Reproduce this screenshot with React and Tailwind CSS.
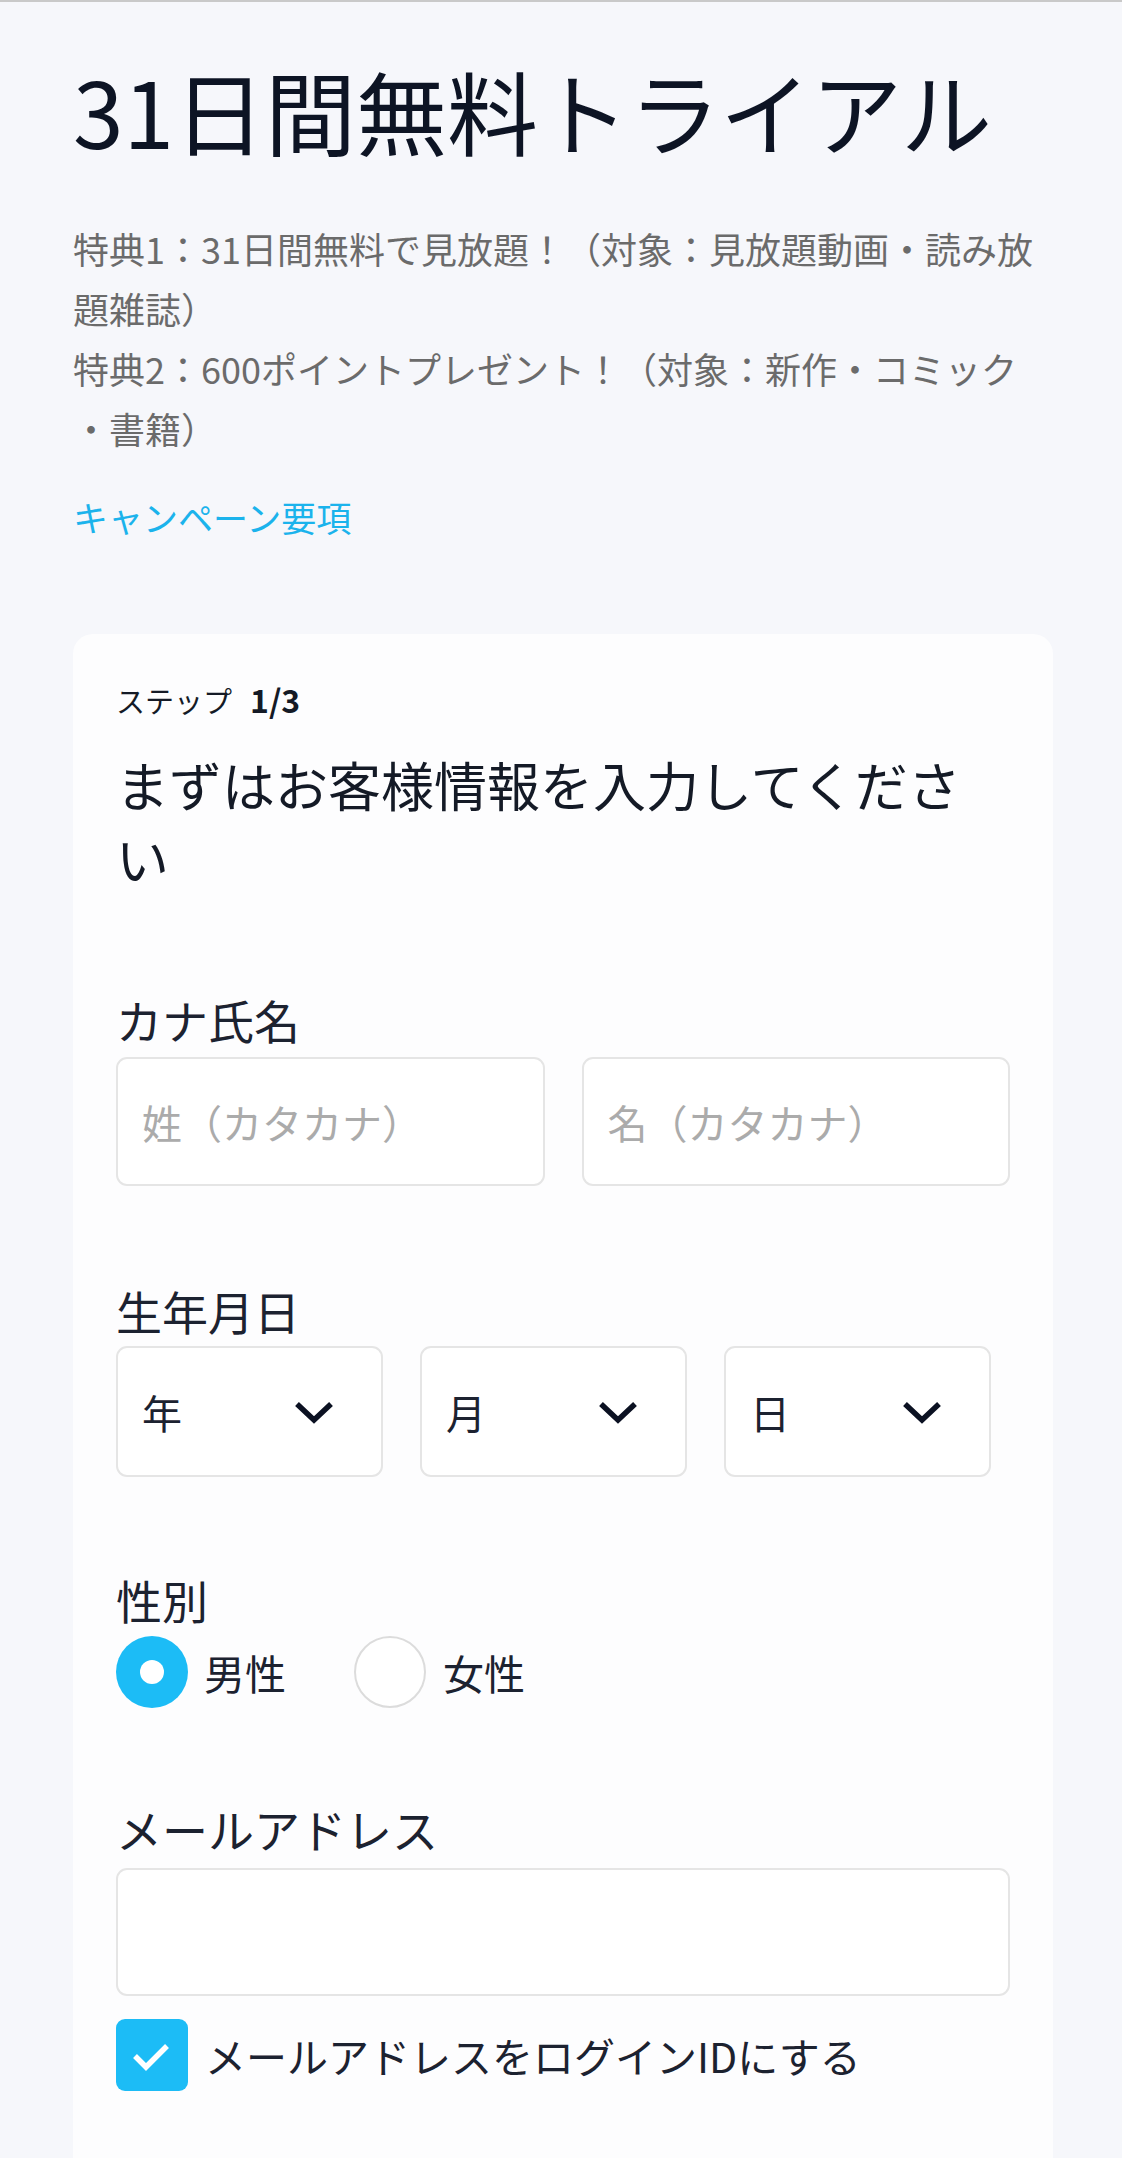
import React from "react";

function Chevron() {
  return (
    <svg width="42" height="24" viewBox="0 0 42 24" fill="none" className="shrink-0">
      <path d="M4 4 L21 20 L38 4" stroke="#0b1122" strokeWidth="5.5" strokeLinecap="butt" strokeLinejoin="miter" />
    </svg>
  );
}

function SelectBox({ label }) {
  return (
    <div className="w-[267px] h-[131px] bg-white border-2 border-[#e5e5e5] rounded-[11px] flex items-center justify-between pl-[24px] pr-[46px]">
      <span className="text-[40px] leading-none text-[#1c2230]">{label}</span>
      <Chevron />
    </div>
  );
}

export default function App() {
  return (
    <div className="min-h-[2158px] bg-[#f6f7fb] border-t-2 border-[#c9c9c9] pl-[73px] pr-[69px] pt-[50px] pb-[40px] font-['Noto_Sans_CJK_JP','Noto_Sans',sans-serif]">
      <h1 className="text-[91px] leading-[115px] text-[#0d1424] font-normal">
        31日間無料トライアル
      </h1>

      <p className="mt-[51px] text-[36px] leading-[60px] text-[#6b6b6b]">
        特典1：31日間無料で見放題！（対象：見放題動画・読み放<br />
        題雑誌）<br />
        特典2：600ポイントプレゼント！（対象：新作・コミック<br />
        ・書籍）
      </p>

      <div className="mt-[29px] text-[35px] leading-[60px] text-[#1bb3ec]">キャンペーン要項</div>

      <div className="mt-[87px] bg-[#fdfdfe] rounded-[20px] pl-[43px] pr-[43px] pt-[44px] pb-[120px]">
        <div className="text-[29px] leading-[42px] text-[#141a26] flex items-baseline">
          <span>ステップ</span>
          <span className="ml-[18px] text-[32px] font-bold">1/3</span>
        </div>

        <h2 className="mt-[26px] text-[53px] leading-[74px] text-[#141a26] font-normal">
          まずはお客様情報を入力してください
        </h2>

        <div className="mt-[90px] text-[46px] leading-[68px] text-[#1c2230]">カナ氏名</div>
        <div className="mt-[4px] grid grid-cols-2 gap-[37px]">
          <input
            type="text"
            placeholder="姓（カタカナ）"
            className="h-[129px] w-full bg-white border-2 border-[#e5e5e5] rounded-[11px] px-[24px] text-[40px] text-[#1c2230] placeholder:text-[#ababab] outline-none"
          />
          <input
            type="text"
            placeholder="名（カタカナ）"
            className="h-[129px] w-full bg-white border-2 border-[#e5e5e5] rounded-[11px] px-[24px] text-[40px] text-[#1c2230] placeholder:text-[#ababab] outline-none"
          />
        </div>

        <div className="mt-[90px] text-[46px] leading-[68px] text-[#1c2230]">生年月日</div>
        <div className="mt-[2px] flex gap-[37px]">
          <SelectBox label="年" />
          <SelectBox label="月" />
          <SelectBox label="日" />
        </div>

        <div className="mt-[88px] text-[46px] leading-[68px] text-[#1c2230]">性別</div>
        <div className="mt-[3px] flex items-center">
          <div className="flex items-center">
            <div className="w-[72px] h-[72px] rounded-full bg-[#1cbcf6] flex items-center justify-center">
              <div className="w-[24px] h-[24px] rounded-full bg-white" />
            </div>
            <span className="ml-[16px] text-[41px] leading-none text-[#1c2230]">男性</span>
          </div>
          <div className="ml-[68px] flex items-center">
            <div className="w-[72px] h-[72px] rounded-full bg-white border-2 border-[#dcdcdc]" />
            <span className="ml-[17px] text-[41px] leading-none text-[#1c2230]">女性</span>
          </div>
        </div>

        <div className="mt-[86px] text-[46px] leading-[68px] text-[#1c2230]">メールアドレス</div>
        <input
          type="email"
          className="mt-[6px] block h-[128px] w-full bg-white border-2 border-[#e5e5e5] rounded-[11px] px-[24px] text-[40px] text-[#1c2230] outline-none"
        />

        <div className="mt-[23px] flex items-center">
          <div className="w-[72px] h-[72px] rounded-[9px] bg-[#1cbcf6] flex items-center justify-center">
            <svg width="72" height="72" viewBox="0 0 72 72" fill="none">
              <path d="M19 37 L30 48 L51 27" stroke="#ffffff" strokeWidth="5.5" strokeLinecap="butt" strokeLinejoin="miter" />
            </svg>
          </div>
          <span className="ml-[17px] text-[41px] leading-none text-[#1c2230]">メールアドレスをログインIDにする</span>
        </div>
      </div>
    </div>
  );
}
